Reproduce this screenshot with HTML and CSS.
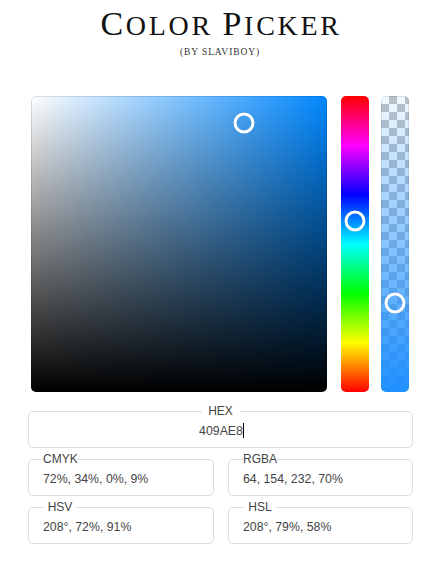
FILE: index.html
```html
<!DOCTYPE html>
<html>
<head>
<meta charset="utf-8">
<link rel="stylesheet" href="styles.css">
</head>
<body>
<div class="app">
  <header class="header">
    <h1 class="title"><span class="cap">C</span>olor <span class="cap">P</span>icker</h1>
    <p class="subtitle">(by slaviboy)</p>
  </header>
  <div class="picker">
    <div class="sv">
      <span class="knob" style="left:72%; top:9%"></span>
    </div>
    <div class="hue">
      <span class="knob knob-bar" style="top:42.2%"></span>
    </div>
    <div class="alpha">
      <div class="alpha-fill"></div>
      <span class="knob knob-bar" style="top:70%"></span>
    </div>
  </div>
  <div class="fields">
    <fieldset class="field field-wide">
      <legend class="legend legend-wide"><span class="legend-text">HEX</span></legend>
      <div class="value value-center">409AE8<span class="caret"></span></div>
    </fieldset>
    <fieldset class="field">
      <legend class="legend"><span class="legend-text">CMYK</span></legend>
      <div class="value">72%, 34%, 0%, 9%</div>
    </fieldset>
    <fieldset class="field">
      <legend class="legend"><span class="legend-text">RGBA</span></legend>
      <div class="value">64, 154, 232, 70%</div>
    </fieldset>
    <fieldset class="field">
      <legend class="legend"><span class="legend-text">HSV</span></legend>
      <div class="value">208°, 72%, 91%</div>
    </fieldset>
    <fieldset class="field">
      <legend class="legend"><span class="legend-text">HSL</span></legend>
      <div class="value">208°, 79%, 58%</div>
    </fieldset>
  </div>
</div>
</body>
</html>
```
FILE: styles.css
```css
html, body {
  margin: 0;
  padding: 0;
  background: #fff;
}
body {
  font-family: "Liberation Sans", Arial, sans-serif;
  color: #444;
}
.app {
  width: 438px;
  height: 564px;
  display: flex;
  flex-direction: column;
}
.header {
  text-align: center;
  padding-top: 6px;
}
.title {
  margin: 0;
  font-family: "Liberation Serif", "Times New Roman", serif;
  font-weight: normal;
  text-transform: uppercase;
  font-size: 28px;
  line-height: 36px;
  letter-spacing: 2.7px;
  color: #111;
  padding-left: 4px;
}
.cap {
  font-size: 34px;
}
.subtitle {
  margin: 2px 0 0;
  font-family: "Liberation Serif", "Times New Roman", serif;
  text-transform: uppercase;
  font-size: 9.5px;
  line-height: 12px;
  letter-spacing: 0.9px;
  color: #333;
  padding-left: 2px;
}
.picker {
  display: flex;
  margin-top: 38px;
  padding-left: 31px;
  height: 296px;
}
.sv {
  position: relative;
  width: 296px;
  height: 296px;
  border-radius: 5px;
  box-shadow: inset 0 0 0 1px rgba(0,0,0,0.12);
  background:
    linear-gradient(to top, #000, rgba(0,0,0,0)),
    linear-gradient(to right, #fff, hsl(208, 100%, 50%));
}
.hue {
  position: relative;
  width: 28px;
  height: 296px;
  margin-left: 14px;
  border-radius: 5px;
  background: linear-gradient(to bottom,
    #ff0000 0%, #ff00ff 16.67%, #0000ff 33.33%, #00ffff 50%,
    #00ff00 66.67%, #ffff00 83.33%, #ff0000 100%);
}
.alpha {
  position: relative;
  width: 28px;
  height: 296px;
  margin-left: 12px;
  border-radius: 5px;
  background-color: #fff;
  background-image:
    linear-gradient(45deg, #c4c4c4 25%, transparent 25%, transparent 75%, #c4c4c4 75%),
    linear-gradient(45deg, #c4c4c4 25%, transparent 25%, transparent 75%, #c4c4c4 75%);
  background-size: 16px 16px;
  background-position: 0 0, 8px 8px;
  box-shadow: inset 0 0 0 1px rgba(0,0,0,0.1);
}
.alpha-fill {
  position: absolute;
  inset: 0;
  border-radius: 5px;
  background: linear-gradient(to bottom, rgba(30,144,255,0.06), rgba(30,144,255,1));
}
.knob {
  position: absolute;
  width: 21px;
  height: 21px;
  box-sizing: border-box;
  border: 3.5px solid #fff;
  border-radius: 50%;
  transform: translate(-50%, -50%);
  box-shadow: 0 0 1px rgba(0,0,0,0.3);
}
.knob-bar {
  left: 50%;
}
.fields {
  display: grid;
  grid-template-columns: 186px 185px;
  column-gap: 14px;
  row-gap: 4px;
  margin-top: 12px;
  padding-left: 28px;
}
.field {
  margin: 0;
  padding: 0 14px;
  height: 44px;
  box-sizing: border-box;
  border: 1px solid #dcdcdc;
  border-radius: 5px;
  min-width: 0;
}
.field-wide {
  grid-column: 1 / span 2;
}
.legend {
  width: 34px;
  padding: 0;
  text-align: left;
  font-size: 12px;
  line-height: 14px;
  color: #444;
  white-space: nowrap;
}
.legend-text {
  display: block;
  text-align: center;
}
.legend-wide {
  margin: 0 auto;
  width: 38px;
}
.value {
  padding-top: 2px;
  font-size: 12.3px;
  line-height: 22px;
  color: #444;
  white-space: nowrap;
}
.value-center {
  text-align: center;
  padding-left: 2px;
}
.caret {
  display: inline-block;
  width: 0;
  height: 15px;
  border-left: 1px solid #000;
  vertical-align: -3px;
}
```
